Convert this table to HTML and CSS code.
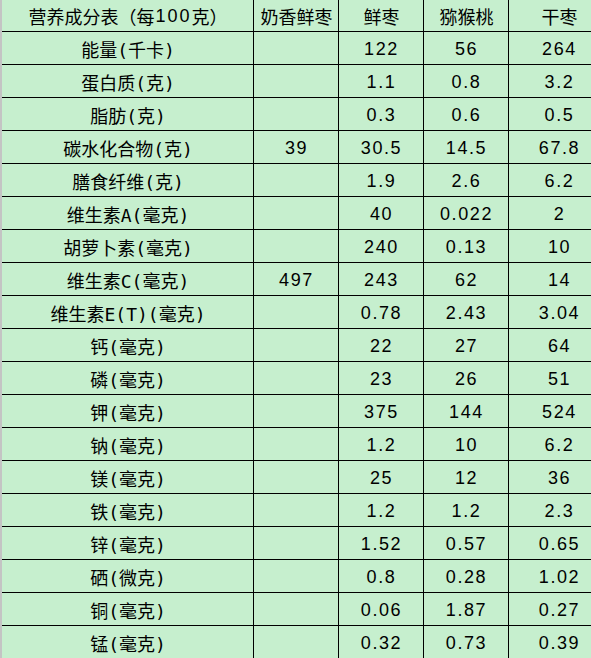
FILE: index.html
```html
<!DOCTYPE html>
<html lang="zh">
<head>
<meta charset="utf-8">
<title>营养成分表</title>
<link rel="stylesheet" href="styles.css">
</head>
<body>
<div class="sheet">
  <div class="grid">
    <div class="c name hd">营养成分表（每<span class="num">100</span>克）</div><div class="c hd">奶香鲜枣</div><div class="c hd">鲜枣</div><div class="c hd">猕猴桃</div><div class="c hd last">干枣</div>
    <div class="c name">能量(千卡)</div><div class="c"></div><div class="c">122</div><div class="c">56</div><div class="c last">264</div>
    <div class="c name">蛋白质(克)</div><div class="c"></div><div class="c">1.1</div><div class="c">0.8</div><div class="c last">3.2</div>
    <div class="c name">脂肪(克)</div><div class="c"></div><div class="c">0.3</div><div class="c">0.6</div><div class="c last">0.5</div>
    <div class="c name">碳水化合物(克)</div><div class="c">39</div><div class="c">30.5</div><div class="c">14.5</div><div class="c last">67.8</div>
    <div class="c name">膳食纤维(克)</div><div class="c"></div><div class="c">1.9</div><div class="c">2.6</div><div class="c last">6.2</div>
    <div class="c name">维生素A(毫克)</div><div class="c"></div><div class="c">40</div><div class="c">0.022</div><div class="c last">2</div>
    <div class="c name">胡萝卜素(毫克)</div><div class="c"></div><div class="c">240</div><div class="c">0.13</div><div class="c last">10</div>
    <div class="c name">维生素C(毫克)</div><div class="c">497</div><div class="c">243</div><div class="c">62</div><div class="c last">14</div>
    <div class="c name">维生素E(T)(毫克)</div><div class="c"></div><div class="c">0.78</div><div class="c">2.43</div><div class="c last">3.04</div>
    <div class="c name">钙(毫克)</div><div class="c"></div><div class="c">22</div><div class="c">27</div><div class="c last">64</div>
    <div class="c name">磷(毫克)</div><div class="c"></div><div class="c">23</div><div class="c">26</div><div class="c last">51</div>
    <div class="c name">钾(毫克)</div><div class="c"></div><div class="c">375</div><div class="c">144</div><div class="c last">524</div>
    <div class="c name">钠(毫克)</div><div class="c"></div><div class="c">1.2</div><div class="c">10</div><div class="c last">6.2</div>
    <div class="c name">镁(毫克)</div><div class="c"></div><div class="c">25</div><div class="c">12</div><div class="c last">36</div>
    <div class="c name">铁(毫克)</div><div class="c"></div><div class="c">1.2</div><div class="c">1.2</div><div class="c last">2.3</div>
    <div class="c name">锌(毫克)</div><div class="c"></div><div class="c">1.52</div><div class="c">0.57</div><div class="c last">0.65</div>
    <div class="c name">硒(微克)</div><div class="c"></div><div class="c">0.8</div><div class="c">0.28</div><div class="c last">1.02</div>
    <div class="c name">铜(毫克)</div><div class="c"></div><div class="c">0.06</div><div class="c">1.87</div><div class="c last">0.27</div>
    <div class="c name">锰(毫克)</div><div class="c"></div><div class="c">0.32</div><div class="c">0.73</div><div class="c last">0.39</div>
  </div>
  <div class="marker"></div>
</div>
</body>
</html>
```
FILE: styles.css
```css
html, body {
  margin: 0;
  padding: 0;
  background: #c6efce;
  overflow: hidden;
}
.sheet {
  position: relative;
  width: 591px;
  height: 658px;
  overflow: hidden;
  border-left: 2px solid #c4c4c4;
  box-sizing: border-box;
  background: #c6efce;
}
.grid {
  display: grid;
  grid-template-columns: 252px 85px 85px 85px 100px;
  grid-template-rows: 32px;
  grid-auto-rows: 33px;
  font-family: "Liberation Sans", "Noto Sans CJK SC", sans-serif;
  font-size: 18px;
  letter-spacing: 1.6px;
  color: #000;
}
.c {
  box-sizing: border-box;
  border-right: 1px solid #000;
  border-bottom: 1px solid #000;
  display: flex;
  align-items: center;
  justify-content: center;
  white-space: nowrap;
  padding-top: 2px;
  padding-left: 1px;
}
.c.hd {
  letter-spacing: 0;
  font-family: "Noto Sans CJK SC", sans-serif;
  padding-top: 1px;
}
.c.name {
  letter-spacing: 0;
  font-family: "DejaVu Sans Mono", "Noto Sans CJK SC", monospace;
}
.num {
  font-family: "Liberation Sans", sans-serif;
  letter-spacing: 2px;
  margin-left: 1px;
}
.c.last {
  border-right: none;
}
.marker {
  position: absolute;
  left: -2px;
  top: 361px;
  width: 2px;
  height: 34px;
  background: #5fa933;
}
```
